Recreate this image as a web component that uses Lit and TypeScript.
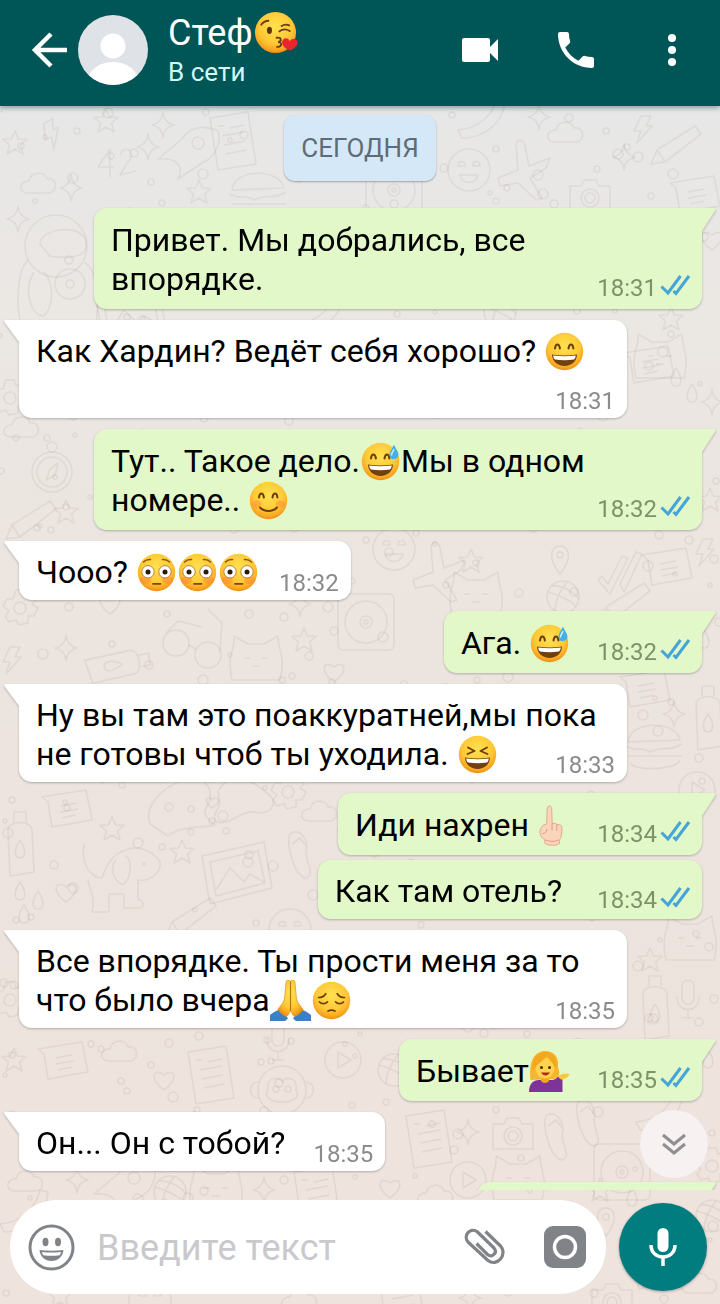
import { LitElement, html, svg, css, unsafeCSS, nothing } from "lit";
import { customElement, state } from "lit/decorators.js";

/* ---------- wallpaper ---------- */

const doodles: Record<string, string> = {
  star: '<path d="M0-12 3.5-4 12-3.500 5.500 2 8 11 0 6-8 11-5.500 2-12-3.500-3.500-4Z"/>',
  spark: '<path d="M0-13Q1-2 11 0Q1 2 0 13Q-1 2-11 0Q-1-2 0-13Z"/>',
  cloud: '<path d="M-12 9C-22 8-19-4-10-3C-8-13 6-13 8-5C18-7 20 8 10 9Z"/>',
  heart: '<path d="M0 10C-16-1-10-13 0-5C10-13 16-1 0 10Z"/>',
  drop: '<path d="M0-10C7 0 6 8 0 8C-6 8-7 0 0-10Z"/>',
  bolt: '<path d="M-2-13H8L3-3H9L-6 14-2 2H-9Z"/>',
  smile: '<circle r="21"/><path d="M-11-4C-11-10-4-10-4-4ZM4-4C4-10 11-10 11-4ZM-9 5H9C7 15-7 15-9 5Z"/>',
  play: '<circle r="18"/><path d="M-5-8 8 0-5 8Z"/>',
  camera: '<path d="M-20-10H-9L-6-16H6L9-10H20V15H-20Z"/><circle cy="2" r="9"/><circle cy="2" r="5"/>',
  note: '<path d="M-26-13-20-8-16 17 24 10 18-20-26-13ZM-8-4 8-7M-8 2 10-1M-6 8 8 5"/>',
  page: '<path d="M-22-24 16-30 24 22-14 28ZM-14-16H-8M-2-14 12-17M-10-6 12-10M-8 3 13-1M-6 12 14 8"/>',
  plane: '<path d="M-24 6 -4-2-6-28C-4-34 2-32 3-26L7-6 28-14 24-4 8 6 20 26 14 28-4 11-22 14Z"/>',
  banana: '<path d="M-24 12C0 10 12-6 16-22L24-20C22 4 4 20-20 20Z"/>',
  disc: '<rect x="-28" y="-28" width="56" height="56" rx="5"/><circle r="21"/><circle r="6"/><circle r="2"/>',
  compass: '<circle r="20"/><circle r="15"/><circle cy="-25" r="5"/><path d="M-6 8-2-3 6-9 3 3Z"/>',
  gear: '<circle r="6"/><path d="M-4-18H4L6-12 12-14 16-8 12-4 18 0 14 8 8 8 8 15-1 17-4 12-11 14-15 8-11 3-17-2-13-9-7-9Z"/>',
  dog: '<path d="M-38-32C-42-8-28 2-20 2C-16-10-10-22 4-26C16-32 32-24 38-14C40-4 28 6 16 4V24C22 24 24 32 16 32H2V18H-12C-16 24-10 32-14 36H-30C-26 20-34 10-34 4"/><path d="M-6-16C-14-8-6 10 2 8C10 0 10-16 4-20"/><circle cx="22" cy="-12" r="1"/>',
  frame: '<path d="M-34-14 28-28 36 18-26 34ZM-26-8 22-19 29 13-20 26Z"/><path d="M-20 20-6-2 8 12 14 4 28 12"/><circle cx="12" cy="-8" r="5"/>',
  astronaut: '<circle cy="-26" r="31"/><path d="M-16-28C-16-44 30-50 30-28C32-12 6-14-6-16ZM-28-12C-40-2-40 44-34 52H40C44 20 40-4 28-10M-22 0C-34 20-24 44-12 44C0 32-4 8-12 0"/><circle cx="14" cy="12" r="15"/><circle cx="14" cy="12" r="4"/>',
  rocket: '<path d="M-30 6-6-14C4-30 22-26 30-22C34-12 28 4 14 10L-10 26C-4 14-10 4-30 6Z"/><circle cx="10" cy="-10" r="6"/>',
  burger: '<path d="M-26-6C-24-28 22-28 26-8ZM-28-2C-20 4-12-2-4 4C6-2 16 4 28-4M-26 8H28M-24 14C-22 24 24 22 26 12"/>',
  hands: '<path d="M-60 16C-66 0-50-22-24-28C0-34 4-12-2-4C-10 8 0 12 4 16C10 20-30 16-42 28ZM6 14C0 4 14 2 8-16C18-38 44-28 58-14C70-6 60 8 46 4C30 2 20 18 8 14Z"/><path d="M2 0C-8-8-2-14 2-8C6-14 14-8 2 0Z"/>',
  monkey: '<circle r="24"/><path d="M-14 0C-16-16 0-12 0-8C0-12 16-16 14 0C24 16-24 16-14 0ZM-24-8C-34-8-34 8-24 8M24-8C34-8 34 8 24 8"/><circle cx="-6" cy="-1" r="3"/><circle cx="6" cy="-1" r="3"/>',
  glasses: '<circle cx="-16" cy="-4" r="13"/><circle cx="16" cy="8" r="13"/><path d="M-4-2 4 2M-26-14-14-26 10-20M28 4 30-24 16-38"/>',
  bottle: '<path d="M-12-16C-12-26 12-26 12-16L14 26-10 30ZM-6-24V-34H6V-24"/><path d="M0-6C8 6 4 12 0 12C-4 12-8 6 0-6Z"/>',
  ball: '<circle r="16"/><path d="M-15-5C-4-2 8 4 13 9M4-15C-4-6-8 6-8 14M-11-11C0-12 12-4 16 2"/>',
  check: '<path d="M-20 6-16 2-10 10 4-18 10-16-8 20ZM2 10 18-22 24-20 6 18Z"/>',
  pin: '<path d="M0 14C-14-4-8-14 0-14C8-14 14-4 0 14Z"/><circle cy="-5" r="3"/>',
  flops: '<path d="M-14-16C-4-24 6-8 2 2C2 14 12 24 2 28C-10 26-18-6-14-16ZM-12-6-4-12 2-4"/>',
  mic: '<rect x="-6" y="-20" width="12" height="24" rx="6"/><path d="M-11-4C-12 14 12 14 11-4M0 10V18M-6 18H6"/>',
  pencil: '<path d="M-24 16-18 2 20-22 26-14-10 14ZM-18 2-10 14"/>',
  num: '<path d="M-6-14-18 4H-2M-6-14V14M4-8C6-18 20-14 14-4L4 12 20 8"/>',
  cat: '<path d="M-24 20C-30-8-20-10-22-24L-8-16H8L22-24C22-8 30-4 24 20Z"/><path d="M-12-2H-6M6-2H12M-4 6H4"/>',
};

const places: [string, number, number, number?][] = [
  ["star", 106, 121], ["spark", 163, 125], ["star", 15, 143], ["bolt", 52, 134, -30], ["spark", 148, 147],
  ["num", 116, 163], ["rocket", 188, 153], ["page", 232, 142], ["cloud", 39, 184], ["spark", 71, 188],
  ["star", 199, 192], ["banana", 482, 118], ["spark", 539, 117], ["cloud", 566, 133], ["smile", 469, 170],
  ["plane", 522, 172], ["spark", 624, 157], ["bolt", 643, 129], ["pencil", 675, 148], ["note", 696, 196],
  ["camera", 590, 196], ["disc", 394, 190], ["burger", 258, 196], ["spark", 18, 219], ["astronaut", 56, 272],
  ["heart", 712, 240], ["cat", 660, 358], ["star", 671, 319], ["drop", 676, 378], ["drop", 692, 394],
  ["note", 650, 366], ["spark", 712, 402], ["gear", 10, 398], ["compass", 52, 472], ["star", 66, 512],
  ["pencil", 30, 523], ["cloud", 22, 428], ["frame", 130, 312], ["banana", 320, 312], ["ball", 500, 312],
  ["star", 710, 500], ["pin", 560, 560], ["check", 618, 574], ["note", 668, 568], ["star", 471, 561],
  ["bolt", 705, 552], ["plane", 437, 574], ["smile", 394, 549], ["cat", 476, 596], ["ball", 563, 597],
  ["pencil", 624, 605], ["gear", 20, 608], ["heart", 110, 604], ["glasses", 192, 647], ["bolt", 12, 660],
  ["spark", 66, 648], ["star", 304, 640], ["disc", 366, 622], ["bottle", 116, 665, 80], ["cat", 256, 660],
  ["heart", 334, 672], ["spark", 300, 604], ["spark", 674, 714], ["burger", 654, 748], ["bottle", 708, 720],
  ["play", 697, 790], ["note", 646, 690], ["drop", 704, 640], ["note", 68, 810], ["bottle", 20, 846],
  ["hands", 210, 808], ["star", 112, 829], ["dog", 122, 876], ["star", 182, 852], ["frame", 236, 870],
  ["heart", 66, 892], ["drop", 20, 892], ["drop", 38, 901], ["drop", 24, 915], ["flops", 304, 850],
  ["pencil", 190, 920], ["gear", 288, 792], ["cloud", 320, 812], ["smile", 290, 930], ["cat", 690, 940],
  ["mic", 688, 1000], ["star", 650, 960], ["bottle", 655, 1010], ["drop", 708, 1060], ["banana", 660, 1110],
  ["gear", 10, 1000], ["star", 14, 1060], ["note", 64, 1062], ["cloud", 120, 1052], ["heart", 164, 1080],
  ["page", 210, 1076], ["mic", 278, 1042], ["play", 343, 1060], ["monkey", 282, 1090], ["ball", 394, 1070],
  ["page", 428, 1140], ["spark", 468, 1132], ["camera", 513, 1134], ["flops", 560, 1132], ["flops", 592, 1118],
  ["play", 468, 1180], ["cat", 518, 1180], ["disc", 622, 1172], ["gear", 712, 1166], ["cloud", 26, 1182],
  ["spark", 77, 1180], ["rocket", 124, 1188], ["ball", 170, 1192], ["cat", 216, 1190], ["spark", 264, 1190],
  ["page", 316, 1196], ["heart", 390, 1188], ["cloud", 436, 1196], ["drop", 632, 1198], ["banana", 24, 1212],
  ["star", 600, 1190], ["smile", 150, 1300], ["star", 60, 1296], ["page", 400, 1296], ["spark", 470, 1298],
  ["cloud", 700, 1284], ["camera", 612, 1300], ["pin", 606, 1222], ["ball", 712, 1216], ["cloud", 300, 1300],
];

const dots = Array.from({ length: 420 }, (_, i) => {
  const x = (i * 137 + ((i * i) % 53) * 5) % 720;
  const y = 110 + ((i * 83 + ((i * i * 7) % 61) * 9) % 1190);
  return `<circle cx="${x}" cy="${y}" r="${[2, 3, 4, 3, 5][i % 5]}"/>`;
}).join("");

const wallpaper = encodeURIComponent(
  `<svg xmlns="http://www.w3.org/2000/svg" width="720" height="1304"><g fill="none" stroke="#7d7066" stroke-opacity=".1" stroke-width="1.600" stroke-linejoin="round">${dots}${places
    .map(([n, x, y, r = 0]) => `<g transform="translate(${x} ${y}) rotate(${r})">${doodles[n]}</g>`)
    .join("")}</g></svg>`,
);

/* ---------- emoji ---------- */

const face = svg`<circle cx="20.500" cy="20.500" r="18.700" fill="url(#skin)"/>`;
const arcs = svg`<path d="M11 17.500c.6-5.500 4.200-5.500 4.900 0M24.500 17.500c.7-5.500 4.300-5.500 4.900 0" fill="none" stroke="#6b3f0c" stroke-width="2" stroke-linecap="round"/>`;
const grin = svg`<path d="M8 23.500c8 1.200 17 1.200 25 0 0 6.500-5.500 11.500-12.500 11.500S8 30 8 23.500Z" fill="#70400f"/><path d="M9.200 24.600c7.500 1 15.100 1 22.600 0-.3 2.300-1 3.400-1.900 4-6 .9-12.800.9-18.800 0-1-.6-1.700-1.700-1.900-4Z" fill="#fff"/>`;

const emoji: Record<string, { label: string; art: unknown }> = {
  "😘": {
    label: "воздушный поцелуй",
    art: svg`${face}<ellipse cx="15" cy="18.500" rx="2.300" ry="3.300" fill="#5d3509"/>
      <path d="M7.500 13.500c1.800-2.600 4-3.600 6.500-3.700M24 19.500c2.800-2.300 6-2.500 9.500-.4M26 14.600c2.600-1.700 4.700-1.700 7-.6" fill="none" stroke="#6b3f0c" stroke-width="1.700" stroke-linecap="round"/>
      <path d="M21.500 25.300c4.800-.8 4.800 3.300 1.400 4 3.900 0 3.700 4.300-1 4.300" fill="none" stroke="#6b3f0c" stroke-width="1.700" stroke-linecap="round"/>
      <path d="M33.500 37c-6.500-3-8.500-7.200-6-10.200 2.200-2.200 5.200-1 6 1.600 1.800-2.500 5-2.900 6.600-.6 1.900 3.200-1.300 6.900-6.600 9.200Z" fill="#e8242c"/>`,
  },
  "😄": { label: "широкая улыбка", art: svg`${face}${arcs}${grin}` },
  "😅": {
    label: "улыбка с каплей пота",
    art: svg`${face}${arcs}${grin}<path d="M34 3.500c-1.500 4-4.800 7-4.500 10.700.3 5.200 8.700 5.200 9-.2C38.600 10.400 35.300 7.500 34 3.500Z" fill="#45aee6"/><path d="M34 8c-1 2.500-2.700 4-2.500 6.500" fill="none" stroke="#c6edff" stroke-width="1.600"/>`,
  },
  "😊": {
    label: "довольная улыбка",
    art: svg`${face}<ellipse cx="8.500" cy="24" rx="5" ry="3.500" fill="#ff8a3c" opacity=".45"/><ellipse cx="32.500" cy="24" rx="5" ry="3.500" fill="#ff8a3c" opacity=".45"/>${arcs}
      <path d="M12 27.500c4.500 4.600 12.500 4.600 17 0" fill="none" stroke="#6b3f0c" stroke-width="2" stroke-linecap="round"/>`,
  },
  "😳": {
    label: "смущение",
    art: svg`${face}<ellipse cx="9.500" cy="28" rx="5.500" ry="4" fill="#ff7a3c" opacity=".4"/><ellipse cx="31.500" cy="28" rx="5.500" ry="4" fill="#ff7a3c" opacity=".4"/>
      <circle cx="12" cy="19.800" r="6.200" fill="#fff" stroke="#b9803c" stroke-width="1"/><circle cx="29" cy="19.800" r="6.200" fill="#fff" stroke="#b9803c" stroke-width="1"/>
      <circle cx="12" cy="20" r="2.500" fill="#2d1a05"/><circle cx="29" cy="20" r="2.500" fill="#2d1a05"/>
      <path d="M7.500 10c2-2 4.500-2.600 7-2.400M33.500 10c-2-2-4.500-2.600-7-2.400" fill="none" stroke="#8a5513" stroke-width="1.500" stroke-linecap="round"/>
      <path d="M17 31.800h7.500" stroke="#7b4710" stroke-width="1.800" stroke-linecap="round"/>`,
  },
  "😆": {
    label: "смех",
    art: svg`${face}<path d="m11 13.500 6.500 3.500-7 3M30 13.500 23.500 17l7 3" fill="none" stroke="#6b3f0c" stroke-width="1.900" stroke-linecap="round" stroke-linejoin="round"/>${grin}`,
  },
  "😔": {
    label: "грусть",
    art: svg`${face}<path d="M8.500 22c2 2.300 6 2.300 8-.2M24.500 21.800c2 2.500 6 2.500 8 .2M7.500 17.500c3.300 0 5.800-1.300 7.300-3.800M33.500 17.500c-3.300 0-5.800-1.300-7.300-3.800M17 31c2-.9 5-.9 7 0" fill="none" stroke="#6b3f0c" stroke-width="1.700" stroke-linecap="round"/>`,
  },
  "🙏": {
    label: "сложенные руки",
    art: svg`<path d="M0 35c4-3.500 8-5 12-6l6 9.500-3 2.500H0ZM41 35c-4-3.500-8-5-12-6l-6 9.500 3 2.500H41Z" fill="#3f7fc8"/>
      <path d="M20.500 1.500c-2-2.600-4.500-1.500-4.500 1.600L14.500 19c-1 4.500-5 7.500-6.500 10.500 2 3 5.500 6 8.500 7 1.500-1 3-3.500 4-6 1 2.500 2.500 5 4 6 3-1 6.500-4 8.500-7-1.500-3-5.500-6-6.500-10.500L25 3.100c0-3.100-2.500-4.200-4.500-1.600Z" fill="url(#skin)" stroke="#e09a20" stroke-width=".8"/>
      <path d="M20.500 1.500V31" stroke="#b97413" stroke-width="1.200"/>`,
  },
  "🖕": {
    label: "жест рукой",
    art: svg`<path d="M18.200 3.500c0-3.300 4.500-3.300 4.500 0L23.200 19c2.600-1.500 4.500-.6 5 .8 3-.8 4.800.6 4.700 3.200 0 5.500-.4 9-2.400 12v3.500c-3 2.500-11 2.500-14.500 0l-.5-4c-3-1.600-5-5-4.600-8.500.6-3.500 3-6.500 6.800-7Z" fill="#fbd5bb" stroke="#e3ab8b" stroke-width="1"/>
      <path d="M17.800 24.500c0 3-2 4-4 4M23 19v6M27.800 20v5.500M16.500 35c4 1.800 9 1.800 13 0" fill="none" stroke="#dda081" stroke-width="1" stroke-linecap="round"/>`,
  },
  "💁": {
    label: "девушка с поднятой ладонью",
    art: svg`<path d="M1.500 29C-1 10 6 0 16 0c9 0 14 6 13 15 .5 4 2 6 1 9l-4 4Z" fill="#f9b52b"/>
      <path d="M0 41c0-8 4-12 10-12h10c4.500 0 7 0 9-4l4.500 1V41Z" fill="#7d3399"/>
      <path d="M28 25c3-.5 8-3.500 12.500-2-1.500 4-5 5.500-8.500 5.500Z" fill="#fcc73f"/>
      <path d="M12 26h8v4c-2 2.500-6 2.500-8 0Z" fill="#f2a71f"/>
      <ellipse cx="16" cy="17" rx="9.500" ry="10.500" fill="#ffd250"/>
      <path d="M4 20C6 13 16 10 18 4c2 6 7 8 8.500 14 3-9-1-17-10-17S2 9 4 20Z" fill="#f3a71f"/>
      <circle cx="12.500" cy="16.500" r="1.500" fill="#4a2c0a"/><circle cx="20.500" cy="16.500" r="1.500" fill="#4a2c0a"/>
      <path d="M12 21.500c2.500 4 6.500 4 9 0Z" fill="#b3261e"/>`,
  },
};

const emojiPattern = new RegExp(`(${Object.keys(emoji).join("|")})`, "u");

const rich = (text: string) =>
  text
    .split(emojiPattern)
    .filter(Boolean)
    .map((part) =>
      emoji[part]
        ? html`<svg class="emoji" viewBox="0 0 41 41" role="img" aria-label=${emoji[part].label}>${emoji[part].art}</svg>`
        : part,
    );

/* ---------- data ---------- */

interface Message {
  own: boolean;
  text: string;
  time: string;
  follow?: boolean;
}

const history: Message[] = [
  { own: true, text: "Привет. Мы добрались, все впорядке.", time: "18:31" },
  { own: false, text: "Как Хардин? Ведёт себя хорошо? 😄", time: "18:31" },
  { own: true, text: "Тут.. Такое дело.😅Мы в одном номере.. 😊", time: "18:32" },
  { own: false, text: "Чооо? 😳😳😳", time: "18:32" },
  { own: true, text: "Ага. 😅", time: "18:32" },
  { own: false, text: "Ну вы там это поаккуратней,мы пока не готовы чтоб ты уходила. 😆", time: "18:33" },
  { own: true, text: "Иди нахрен🖕", time: "18:34" },
  { own: true, text: "Как там отель?", time: "18:34", follow: true },
  { own: false, text: "Все впорядке. Ты прости меня за то что было вчера🙏😔", time: "18:35" },
  { own: true, text: "Бывает💁", time: "18:35" },
  { own: false, text: "Он... Он с тобой?", time: "18:35" },
];

const tailIn = html`<svg class="tail" viewBox="0 0 15 24" aria-hidden="true"><path d="M15 0H2Q-1 0 1 3L15 22Z" fill="#fff" /></svg>`;
const tailOut = html`<svg class="tail" viewBox="0 0 15 24" aria-hidden="true"><path d="M0 0H12Q15 0 13 3L0 23Z" fill="#e2f8c9" /></svg>`;
const ticks = html`<svg class="ticks" viewBox="0 0 30 22" role="img" aria-label="Прочитано">
  <path d="M1.500 12.500 8 19 20.500 2M13.500 17l2.500 2.500L29 2" />
</svg>`;

@customElement("app-root")
export class AppRoot extends LitElement {
  @state() private draft = "";

  static styles = css`
    :host {
      display: flex;
      flex-direction: column;
      height: 100vh;
      font-family: Roboto, "Noto Sans", sans-serif;
      color: #000;
      background:
        url("data:image/svg+xml,${unsafeCSS(wallpaper)}") 0 0 / 720px auto,
        linear-gradient(#e7e7e7 8%, #ebe7e3 24%, #ece4df 50%, #efe3dd);
    }
    * { box-sizing: border-box; }
    button {
      display: flex;
      padding: 0;
      border: 0;
      background: none;
      color: inherit;
      cursor: pointer;
    }
    svg { display: block; flex: none; }
    .defs { width: 0; height: 0; }
    .emoji {
      display: inline-block;
      width: 41px;
      height: 41px;
      margin: -6px 0;
      vertical-align: -4px;
    }

    .bar {
      display: flex;
      align-items: center;
      flex: none;
      padding: 11px 24px 17px 31px;
      background: #005556;
      color: #fff;
      box-shadow: 0 2px 5px rgba(0, 0, 0, 0.35);
      z-index: 1;
    }
    .back svg { width: 37px; height: 38px; }
    .avatar { width: 70px; height: 70px; margin-left: 10px; }
    .who { flex: 1; min-width: 0; margin-left: 20px; }
    .name {
      margin: 0;
      font-size: 36px;
      font-weight: 400;
      line-height: 44px;
      white-space: nowrap;
    }
    .name .emoji { width: 45px; height: 45px; }
    .status {
      margin: 0;
      font-size: 26px;
      line-height: 34px;
      color: #d3f7f5;
    }
    .actions { display: flex; gap: 48px; }
    .actions svg { width: 48px; height: 48px; fill: #fff; }

    .chat {
      position: relative;
      flex: 1;
      min-height: 0;
      overflow: hidden;
      display: flex;
      flex-direction: column;
      padding: 9px 4px 0;
    }
    .day {
      flex: none;
      align-self: center;
      padding: 16px 17px;
      border-radius: 11px;
      background: #d5e8f7;
      box-shadow: 0 1px 2px rgba(0, 0, 0, 0.3);
      font-size: 26px;
      line-height: 34px;
      color: #5f6c76;
    }
    .list {
      display: flex;
      flex-direction: column;
      gap: 11px;
      margin: 27px 0 0;
      padding: 0;
      list-style: none;
    }
    .row {
      display: flex;
      flex: none;
      filter: drop-shadow(0 1px 1px rgba(0, 0, 0, 0.25));
    }
    .row.own { justify-content: flex-end; }
    .row.follow { margin-top: -6px; padding-right: 14px; }
    .tail { width: 15px; height: 24px; }
    .own .tail { margin-right: -1px; }
    .bubble {
      display: grid;
      max-width: 608px;
      border-radius: 13px;
      background: #fff;
    }
    .in .bubble { border-top-left-radius: 0; }
    .own .bubble { background: #e2f8c9; border-top-right-radius: 0; }
    .follow .bubble { border-top-right-radius: 13px; }
    .text {
      grid-area: 1 / 1;
      margin: 0;
      padding: 12px 28px 8px 17px;
      font-size: 32px;
      line-height: 39px;
    }
    .own .text { padding-top: 13px; padding-bottom: 10px; }
    .follow .text { padding-top: 12px; padding-bottom: 8px; }
    .room { display: inline-block; width: 64px; }
    .own .room { width: 104px; }
    .meta {
      grid-area: 1 / 1;
      place-self: end;
      display: flex;
      align-items: center;
      gap: 3px;
      padding: 0 12px 5px 0;
      font-size: 24px;
      line-height: 24px;
      color: #8b8b8d;
    }
    .own .meta { padding-bottom: 7px; color: #7c9268; }
    .follow .meta { padding-bottom: 5px; }
    .ticks {
      width: 30px;
      height: 22px;
      margin-bottom: 6px;
      fill: none;
      stroke: #44a5d8;
      stroke-width: 3;
    }
    .next { width: 225px; height: 62px; }
    .down {
      position: absolute;
      right: 12px;
      bottom: 12px;
      width: 68px;
      height: 68px;
      border-radius: 50%;
      background: #f7f1f1;
      align-items: center;
      justify-content: center;
    }
    .down svg { width: 26px; height: 24px; fill: none; stroke: #8f8f92; stroke-width: 3; }

    .compose {
      flex: none;
      display: flex;
      align-items: center;
      gap: 13px;
      padding: 10px 13px 10px 10px;
    }
    .field {
      flex: 1;
      min-width: 0;
      display: flex;
      align-items: center;
      padding: 0 20px 0 18px;
      height: 94px;
      border-radius: 47px;
      background: #fff;
    }
    .field input {
      flex: 1;
      min-width: 0;
      padding: 2px 0 0 22px;
      border: 0;
      outline: 0;
      background: none;
      font: inherit;
      font-size: 36px;
      line-height: 48px;
    }
    .field input::placeholder { color: #c9c9cd; opacity: 1; }
    .smiley svg { width: 47px; height: 47px; }
    .clip svg { width: 42px; height: 38px; }
    .camera { margin-left: 38px; }
    .camera svg { width: 42px; height: 42px; }
    .voice {
      flex: none;
      align-items: center;
      justify-content: center;
      width: 88px;
      height: 88px;
      border-radius: 50%;
      background: #017c7f;
      box-shadow: 0 1px 3px rgba(0, 0, 0, 0.3);
    }
    .voice svg { width: 28px; height: 40px; }
  `;

  private renderMessage(m: Message) {
    const endsWithEmoji = Boolean(emoji[[...m.text].pop() ?? ""]);
    return html`<li class="row ${m.own ? "own" : "in"} ${m.follow ? "follow" : ""}">
      ${m.own ? nothing : tailIn}
      <div class="bubble">
        <p class="text">${rich(m.text)}${endsWithEmoji ? nothing : "\u00a0"}<span class="room"></span></p>
        <div class="meta"><time>${m.time}</time>${m.own ? ticks : nothing}</div>
      </div>
      ${m.own && !m.follow ? tailOut : nothing}
    </li>`;
  }

  render() {
    return html`
      <svg class="defs" aria-hidden="true">
        <radialGradient id="skin" cx=".5" cy=".36" r=".66">
          <stop offset="0" stop-color="#ffe150" />
          <stop offset=".6" stop-color="#ffc936" />
          <stop offset=".85" stop-color="#faa722" />
          <stop offset="1" stop-color="#e98716" />
        </radialGradient>
      </svg>
      <header class="bar">
        <button class="back" aria-label="Назад">
          <svg viewBox="0 0 37 38"><path d="M20 3 4 19l16 16M4 19h32" fill="none" stroke="#fff" stroke-width="4.500" /></svg>
        </button>
        <svg class="avatar" viewBox="0 0 70 70" role="img" aria-label="Фото профиля">
          <clipPath id="round"><circle cx="35" cy="35" r="35" /></clipPath>
          <g clip-path="url(#round)">
            <rect width="70" height="70" fill="#dfe3e8" />
            <circle cx="35" cy="31" r="12.500" fill="#fff" />
            <path d="M9 64C14 52 24 47 35 47s21 5 26 17v8H9Z" fill="#fff" />
          </g>
        </svg>
        <div class="who">
          <h1 class="name">${rich("Стеф😘")}</h1>
          <p class="status">В сети</p>
        </div>
        <nav class="actions">
          <button aria-label="Видеозвонок">
            <svg viewBox="0 0 24 24"><path d="M17 10.500V7c0-.55-.45-1-1-1H4c-.55 0-1 .45-1 1v10c0 .55.45 1 1 1h12c.55 0 1-.45 1-1v-3.500l4 4v-11l-4 4Z" /></svg>
          </button>
          <button aria-label="Позвонить">
            <svg viewBox="0 0 24 24"><path d="M6.620 10.790c1.440 2.830 3.760 5.140 6.590 6.590l2.200-2.200c.27-.27.67-.36 1.020-.24 1.120.37 2.330.57 3.570.57.55 0 1 .45 1 1V20c0 .55-.45 1-1 1-9.390 0-17-7.610-17-17 0-.55.45-1 1-1h3.500c.55 0 1 .45 1 1 0 1.250.2 2.450.57 3.570.11.35.03.74-.25 1.020l-2.200 2.200Z" /></svg>
          </button>
          <button aria-label="Меню">
            <svg viewBox="0 0 24 24"><circle cx="12" cy="6" r="2" /><circle cx="12" cy="12" r="2" /><circle cx="12" cy="18" r="2" /></svg>
          </button>
        </nav>
      </header>

      <main class="chat">
        <div class="day">СЕГОДНЯ</div>
        <ul class="list">
          ${history.map((m) => this.renderMessage(m))}
          <li class="row own"><div class="bubble next"></div>${tailOut}</li>
        </ul>
        <button class="down" aria-label="К последним сообщениям">
          <svg viewBox="0 0 26 24"><path d="m2 3 11 9 11-9M2 12l11 9 11-9" /></svg>
        </button>
      </main>

      <form class="compose" @submit=${(e: Event) => e.preventDefault()}>
        <div class="field">
          <button class="smiley" type="button" aria-label="Эмодзи">
            <svg viewBox="0 0 47 47">
              <circle cx="23.500" cy="23.500" r="21.500" fill="none" stroke="#808489" stroke-width="3" />
              <ellipse cx="17.500" cy="18" rx="3" ry="4.200" fill="#808489" /><ellipse cx="30" cy="18" rx="3" ry="4.200" fill="#808489" />
              <path d="M11.500 26c8 1 16 1 24 0-.6 6.500-5.500 11-12 11s-11.400-4.500-12-11Z" fill="#808489" />
              <path d="M14 28c6.500.8 12.500.8 19 0-.3 1.500-.8 2.500-1.500 3.300-5.500.7-10.500.7-16 0-.7-.8-1.200-1.800-1.500-3.300Z" fill="#fff" />
            </svg>
          </button>
          <input type="text" aria-label="Сообщение" placeholder="Введите текст" .value=${this.draft}
            @input=${(e: InputEvent) => (this.draft = (e.target as HTMLInputElement).value)} />
          <button class="clip" type="button" aria-label="Прикрепить">
            <svg viewBox="0 0 42 38"><path d="m21.500 3.500 15 14.500c7.500 8.500-3.500 21.500-12.500 14.500L4 14C-1.500 7.500 6.500-1 13 3.500L30 20c4 5-2 10-6.500 6.500L12.500 15.500" fill="none" stroke="#808489" stroke-width="3.200" stroke-linejoin="round" /></svg>
          </button>
          <button class="camera" type="button" aria-label="Камера">
            <svg viewBox="0 0 42 42"><rect width="42" height="42" rx="9" fill="#808489" /><circle cx="21" cy="21" r="10.500" fill="none" stroke="#fff" stroke-width="3.500" /></svg>
          </button>
        </div>
        <button class="voice" type="button" aria-label="Голосовое сообщение">
          <svg viewBox="0 0 28 40"><rect x="8.500" y="1" width="11" height="24" rx="5.500" fill="#fff" /><path d="M2 18c0 16 24 16 24 0M14 30v9" fill="none" stroke="#fff" stroke-width="3.500" /></svg>
        </button>
      </form>
    `;
  }
}
